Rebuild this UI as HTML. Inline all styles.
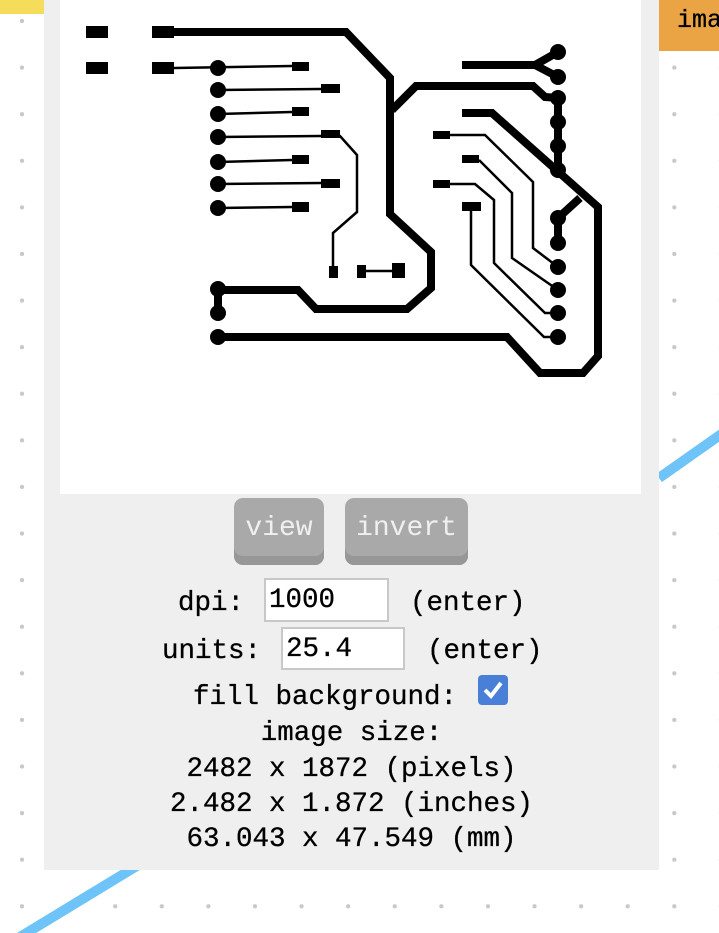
<!DOCTYPE html>
<html><head><meta charset="utf-8"><style>
body{margin:0;width:719px;height:933px;position:relative;overflow:hidden;background:#fff;
background-image:radial-gradient(circle,#c8c8c8 2px,transparent 2.3px);background-size:46.6px 46.6px;background-position:-1.3px -2.3px;font-family:"Liberation Mono","DejaVu Sans Mono",monospace;}
.a{position:absolute}
.t{position:absolute;font-size:27.5px;line-height:35px;color:#000;white-space:pre;-webkit-text-stroke:0.3px #000}
.c{left:44px;width:615px;text-align:center}
.btn{position:absolute;top:498px;height:67px;background:#a9a9a9;border-radius:9px;box-shadow:inset 0 -9px 0 #979797;color:#f0f0f0;font-size:28px;line-height:62px;text-align:center}
.inp{position:absolute;background:#fff;border:2px solid #c8c8c8;box-sizing:border-box;font-size:27.5px;line-height:42px;padding-left:3px;color:#000;-webkit-text-stroke:0.3px #000}
</style></head><body>
<div class="a" style="left:0;top:0;width:44px;height:14px;background:#f5dc5a"></div>
<div class="a" style="left:659px;top:0;width:60px;height:51px;background:#eba443"></div>
<div class="t" style="left:677px;top:3px;font-size:25px">ima</div>
<svg class="a" style="left:0;top:0" width="719" height="933"><line x1="659" y1="478" x2="730" y2="428" stroke="#6ec3f8" stroke-width="10"/><line x1="15" y1="940" x2="140" y2="864" stroke="#6ec3f8" stroke-width="10"/></svg>
<div class="a" style="left:44px;top:0;width:615px;height:870px;background:#efefef"></div>
<div class="a" style="left:60px;top:0;width:581px;height:494px;background:#fff"></div>
<svg class="a" style="left:0;top:0" width="719" height="500">
<g fill="#000">
<rect x="86" y="26" width="22" height="12"/><rect x="86" y="62" width="22" height="12"/>
<rect x="152" y="26" width="22" height="12"/><rect x="152" y="62" width="22" height="12"/>
<rect x="292" y="62" width="17" height="9"/><rect x="321" y="84" width="19" height="9"/>
<rect x="292" y="107" width="17" height="9"/><rect x="321" y="130" width="19" height="8"/>
<rect x="292" y="155" width="17" height="9"/><rect x="321" y="179" width="19" height="9"/>
<rect x="292" y="202" width="17" height="10"/>
<rect x="329" y="266" width="9" height="12"/><rect x="357" y="265" width="9" height="13"/><rect x="392" y="263" width="13" height="15"/>
<rect x="433" y="131" width="17" height="8"/><rect x="462" y="155" width="17" height="8"/>
<rect x="433" y="180" width="17" height="8"/><rect x="462" y="202" width="19" height="9"/>
<g>
<circle cx="218" cy="68" r="8"/><circle cx="218" cy="90" r="8"/><circle cx="218" cy="114" r="8"/><circle cx="218" cy="137" r="8"/><circle cx="218" cy="162" r="8"/><circle cx="218" cy="184" r="8"/><circle cx="218" cy="208" r="8"/>
<circle cx="218" cy="289" r="8"/><circle cx="218" cy="313" r="8"/><circle cx="218" cy="337" r="8"/>
<circle cx="558" cy="52" r="8"/><circle cx="558" cy="77" r="8"/><circle cx="558" cy="98" r="8"/><circle cx="558" cy="122" r="8"/><circle cx="558" cy="146" r="8"/><circle cx="558" cy="170" r="8"/>
<circle cx="558" cy="218" r="8"/><circle cx="558" cy="243" r="8"/><circle cx="558" cy="267" r="8"/><circle cx="558" cy="290" r="8"/><circle cx="558" cy="313" r="8"/><circle cx="558" cy="337" r="8"/>
</g></g>
<g fill="none" stroke="#000" stroke-linejoin="miter">
<g stroke-width="8">
<polyline points="174,32 346,32 390,78 390,214 431,252 431,288 407,309 316,309 298,290 218,290"/>
<polyline points="462,65 535,65 558,52"/><line x1="535" y1="65" x2="558" y2="77"/>
<polyline points="392,110 416,86 533,86 545,97 558,98"/>
<polyline points="462,113 492,113 598,207 598,356 583,373 540,373 507,337 218,337"/>
<polyline points="580,198 558,218 558,243"/>
<line x1="558" y1="98" x2="558" y2="170"/>
<line x1="218" y1="289" x2="218" y2="313"/>
</g>
<g stroke-width="2.5">
<line x1="174" y1="68" x2="292" y2="66"/>
<line x1="218" y1="90" x2="321" y2="89"/>
<line x1="218" y1="114" x2="292" y2="112"/>
<polyline points="218,137 321,136 340,136 357,155 357,212 333,233 333,270"/>
<line x1="218" y1="162" x2="292" y2="160"/>
<line x1="218" y1="184" x2="321" y2="183"/>
<line x1="218" y1="208" x2="292" y2="207"/>
<line x1="366" y1="271" x2="392" y2="271"/>
<polyline points="450,135 485,135 533,182 533,248 558,267"/>
<polyline points="479,160 512,193 512,258 558,290"/>
<polyline points="450,184 475,184 494,200 494,263 545,313 558,313"/>
<polyline points="471,211 471,265 544,337 558,337"/>
</g></g></svg>
<div class="btn" style="left:234px;width:90px">view</div>
<div class="btn" style="left:345px;width:123px">invert</div>
<div class="t" style="left:178px;top:586px">dpi:</div>
<div class="inp" style="left:264px;top:578px;width:125px;height:44px">1000</div>
<div class="t" style="left:410px;top:586px">(enter)</div>
<div class="t" style="left:162px;top:634px">units:</div>
<div class="inp" style="left:281px;top:627px;width:124px;height:43px">25.4</div>
<div class="t" style="left:427px;top:634px">(enter)</div>
<div class="t" style="left:193px;top:680px">fill background:</div>
<svg class="a" style="left:478px;top:675px" width="30" height="30"><rect width="30" height="30" rx="4" fill="#4a7fd8"/><polyline points="7,15 13,21 23,8" fill="none" stroke="#fff" stroke-width="4"/></svg>
<div class="t c" style="top:716px">image size:</div>
<div class="t c" style="top:752px">2482 x 1872 (pixels)</div>
<div class="t c" style="top:787px">2.482 x 1.872 (inches)</div>
<div class="t c" style="top:822px">63.043 x 47.549 (mm)</div>
</body></html>
